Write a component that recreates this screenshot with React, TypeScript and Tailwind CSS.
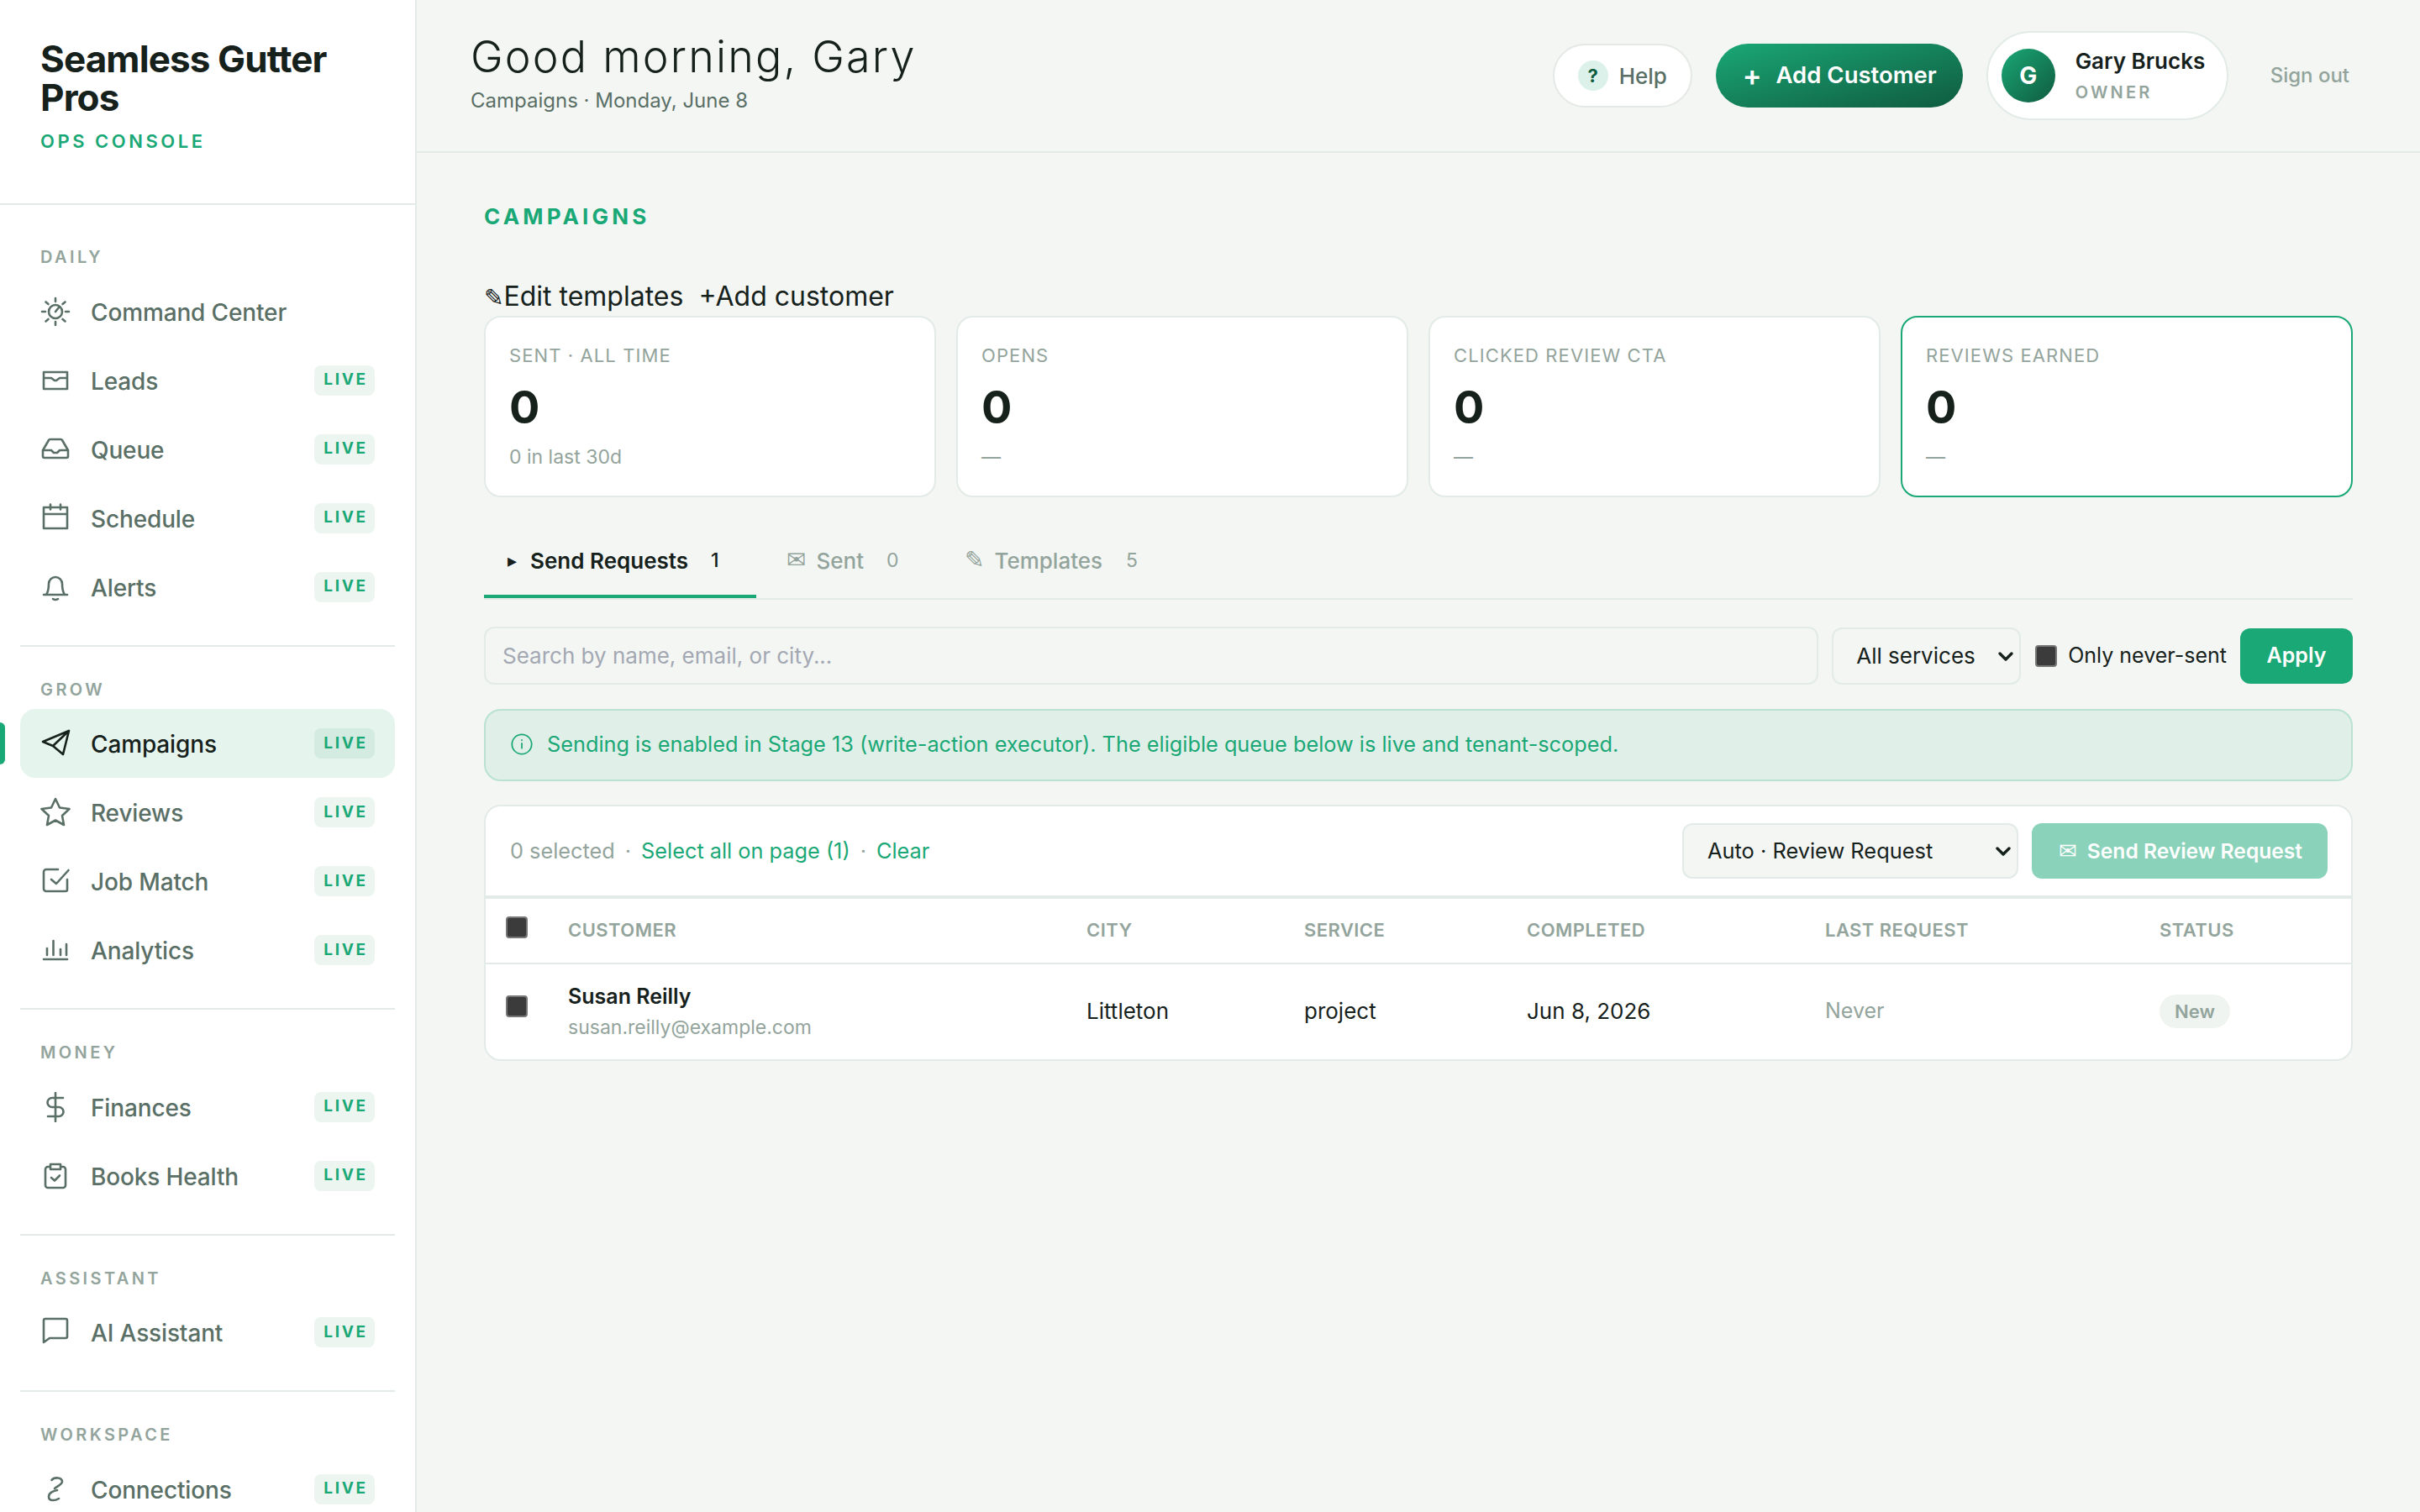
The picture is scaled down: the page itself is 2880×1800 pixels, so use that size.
import type { ReactNode } from "react";

const Stroke = ({ children, dark }: { children: ReactNode; dark?: boolean }) => (
  <svg
    viewBox="0 0 36 36"
    fill="none"
    stroke={dark ? "#16211c" : "#5a6f66"}
    strokeWidth="2.6"
    strokeLinecap="round"
    strokeLinejoin="round"
    className="h-[36px] w-[36px] shrink-0"
  >
    {children}
  </svg>
);

const icons: Record<string, ReactNode> = {
  command: (
    <>
      <circle cx="18" cy="18" r="8" />
      <path d="M18 18l4-5M18 2v4M18 30v4M2 18h4M30 18h4M6.5 6.5l3 2.5M29.5 6.5l-3 2.5M6.5 29.5l3-2.5M29.5 29.5l-3-2.5" />
    </>
  ),
  leads: <path d="M4 8h28v20H4zM4 15h9l4 3h2l4-3h9" />,
  queue: <path d="M3 19h10l3 3h4l3-3h10M10 7L3 19v7a2 2 0 0 0 2 2h26a2 2 0 0 0 2-2v-7L26 7a2 2 0 0 0-2-1H12a2 2 0 0 0-2 1z" />,
  schedule: <path d="M4 5h28v25H4zM4 13h28M12 1.500v6M24 1.500v6" />,
  alerts: <path d="M4 27h28M7 27c2-3 3-6 3-13a8 8 0 0 1 16 0c0 7 1 10 3 13M15 32q3 2 6 0" />,
  campaigns: <path d="M34 3L3 16l12 5 12 10zM34 3L15 21" />,
  reviews: <path d="M18 2l5 10.500 11.500 1.500-8.500 8 2 11-10-5.500-10 5.500 2-11-8.500-8L13 12.500z" />,
  job: <path d="M32 16v12a2 2 0 0 1-2 2H7a3 3 0 0 1-3-3V7a3 3 0 0 1 3-3h14M13 16l6 5L33.500 5" />,
  analytics: <path d="M4 29h28M8 16v8M15.500 7v17M24 17v7M31 11v13" />,
  finances: <path d="M18 1v34M27 7H14a5.500 5.500 0 0 0 0 11h8a5.500 5.500 0 0 1 0 11H9" />,
  books: <path d="M12 7H9a3 3 0 0 0-3 3v19a3 3 0 0 0 3 3h18a3 3 0 0 0 3-3V10a3 3 0 0 0-3-3h-3M12 4h12v6H12zM13 20l4 3.500 6-6" />,
  ai: <path d="M4 30V4a2 2 0 0 1 2-2h24a2 2 0 0 1 2 2v19a2 2 0 0 1-2 2H11z" />,
  connections: <path d="M13.500 7C16 3.500 26 3 26 9c0 3-5 5-9 8M20 19c-5 1-10 3-10 8s7 5 12 2" />,
};

const nav = [
  {
    label: "DAILY",
    items: [
      { name: "Command Center", icon: "command", live: false },
      { name: "Leads", icon: "leads", live: true },
      { name: "Queue", icon: "queue", live: true },
      { name: "Schedule", icon: "schedule", live: true },
      { name: "Alerts", icon: "alerts", live: true },
    ],
  },
  {
    label: "GROW",
    items: [
      { name: "Campaigns", icon: "campaigns", live: true },
      { name: "Reviews", icon: "reviews", live: true },
      { name: "Job Match", icon: "job", live: true },
      { name: "Analytics", icon: "analytics", live: true },
    ],
  },
  {
    label: "MONEY",
    items: [
      { name: "Finances", icon: "finances", live: true },
      { name: "Books Health", icon: "books", live: true },
    ],
  },
  {
    label: "ASSISTANT",
    items: [{ name: "AI Assistant", icon: "ai", live: true }],
  },
  {
    label: "WORKSPACE",
    items: [{ name: "Connections", icon: "connections", live: true }],
  },
];

const stats = [
  { label: "SENT · ALL TIME", sub: "0 in last 30d", hot: false },
  { label: "OPENS", sub: "—", hot: false },
  { label: "CLICKED REVIEW CTA", sub: "—", hot: false },
  { label: "REVIEWS EARNED", sub: "—", hot: true },
];

function Chevron() {
  return (
    <svg viewBox="0 0 20 20" fill="none" stroke="#16211c" strokeWidth="3.400" strokeLinecap="round" strokeLinejoin="round" className="pointer-events-none absolute right-[8px] top-1/2 h-[20px] w-[20px] -translate-y-1/2">
      <path d="M3 7l7 7 7-7" />
    </svg>
  );
}

function Sidebar() {
  return (
    <aside className="relative flex h-full w-[496px] shrink-0 flex-col overflow-hidden border-r-2 border-[#e2ebe7] bg-white">
      <div className="h-[244px] shrink-0 border-b-2 border-[#e2ebe7] pl-[48px] pt-[47px]">
        <div className="w-[380px] text-[44px] font-bold leading-[46px] tracking-[-0.02em] text-[#16211c]">Seamless Gutter Pros</div>
        <div className="mt-[14px] text-[22px] font-semibold leading-[30px] tracking-[0.16em] text-[#1aa876]">OPS CONSOLE</div>
      </div>
      <nav className="pt-[11px]">
        {nav.map((group, i) => (
          <div key={group.label} className={i > 0 ? "mx-[24px] mt-[28px] border-t-2 border-[#e2ebe7] pt-[36px]" : "mx-[24px] pt-[36px]"}>
            <div className="mb-[8.5px] pl-[24px] text-[20px] font-semibold leading-[30px] tracking-[0.17em] text-[#93a49c]">{group.label}</div>
            {group.items.map((item) => {
              const active = item.name === "Campaigns";
              return (
                <div key={item.name} className={`relative flex h-[82px] items-center gap-[24px] rounded-[18px] px-[24px] ${active ? "bg-[#e6f4ee]" : ""}`}>
                  <Stroke dark={active}>{icons[item.icon]}</Stroke>
                  <span className={`pt-[2px] text-[28px] font-medium tracking-[-0.005em] ${active ? "text-[#16211c]" : "text-[#5a6f66]"}`}>{item.name}</span>
                  {item.live && (
                    <span className={`ml-auto flex h-[36px] w-[72px] items-center justify-center rounded-[8px] pl-[3px] text-[19px] font-bold tracking-[0.14em] text-[#1aa876] ${active ? "bg-[#d3ebe1]" : "bg-[#ecf5f0]"}`}>
                      LIVE
                    </span>
                  )}
                  {active && <span className="absolute -left-[24px] top-[16px] h-[50px] w-[6px] rounded-r-[6px] bg-[#1aa876]" />}
                </div>
              );
            })}
          </div>
        ))}
      </nav>
    </aside>
  );
}

function Header() {
  return (
    <header className="flex h-[182px] shrink-0 items-center justify-between border-b-2 border-[#e2ebe7] pl-[64px] pr-[64px]">
      <div className="mb-[6px]">
        <h1 className="text-[52px] font-light leading-[62px] tracking-[0.042em] text-[#16211c]">Good morning, Gary</h1>
        <p className="mt-[4px] text-[24px] leading-[34px] text-[#5a6f66]">Campaigns · Monday, June 8</p>
      </div>
      <div className="flex items-center gap-[28px]">
        <button className="flex h-[76px] w-[166px] items-center gap-[13px] rounded-full border-2 border-[#e4e9e6] bg-white pl-[28px] text-[26px] font-medium text-[#5a6f66]">
          <span className="flex h-[36px] w-[36px] items-center justify-center rounded-full bg-[#dcf1e9] text-[22px] font-bold text-[#0f5c40]">?</span>
          Help
        </button>
        <button className="flex h-[76px] w-[294px] items-center gap-[17px] rounded-full bg-gradient-to-br from-[#1aa876] to-[#0f5c40] pl-[32px] text-[27.500px] font-semibold text-white">
          <span className="text-[34px] leading-none">+</span>
          Add Customer
        </button>
        <div className="flex h-[106px] w-[288px] items-center gap-[24px] rounded-full border-2 border-[#e2ebe7] bg-white pl-[16px]">
          <span className="flex h-[64px] w-[64px] items-center justify-center rounded-full bg-gradient-to-br from-[#1aa876] to-[#0f5c40] text-[28px] font-bold text-white">G</span>
          <div>
            <div className="text-[26px] font-semibold leading-[36px] text-[#16211c]">Gary Brucks</div>
            <div className="mt-[4px] text-[20px] font-semibold leading-[30px] tracking-[0.16em] text-[#93a49c]">OWNER</div>
          </div>
        </div>
        <button className="ml-[2px] px-[20px] text-[24px] font-medium text-[#93a49c]">Sign out</button>
      </div>
    </header>
  );
}

function Tabs() {
  return (
    <div className="mt-[28px] flex h-[94px] gap-[8px] border-b-2 border-[#e2ebe7]">
      <button className="flex h-[92px] w-[324px] items-center border-b-4 border-[#1aa876] pl-[28px] pt-[6px] text-[26px] font-semibold text-[#16211c]">
        <span className="mr-[16px] font-['DejaVu_Sans',sans-serif] text-[22px]">▸</span>
        Send Requests
        <span className="ml-[27px] text-[23px] font-medium">1</span>
      </button>
      <button className="flex h-[92px] w-[204px] items-center border-b-4 border-transparent pl-[28px] pt-[6px] text-[26px] font-medium text-[#93a49c]">
        <span className="mr-[12px] font-['DejaVu_Sans',sans-serif] text-[28px]">✉</span>
        Sent
        <span className="ml-[27px] text-[23px] font-normal">0</span>
      </button>
      <button className="flex h-[92px] items-center border-b-4 border-transparent pl-[28px] pt-[6px] text-[26px] font-medium text-[#93a49c]">
        <span className="mr-[12px] font-['DejaVu_Sans',sans-serif] text-[28px]">✎</span>
        Templates
        <span className="ml-[28px] text-[23px] font-normal">5</span>
      </button>
    </div>
  );
}

function Table() {
  const th = "pb-[2px] text-left text-[22px] font-semibold tracking-[0.02em] text-[#93a49c]";
  return (
    <div className="mt-[28px] overflow-hidden rounded-[20px] border-2 border-[#e2ebe7] bg-white">
      <div className="flex h-[110px] items-center border-b-4 border-[#e2ebe7] pl-[29px] pr-[28px] text-[25.3px]">
        <span className="text-[#93a49c]">0 selected</span>
        <span className="mx-[12px] text-[#93a49c]">·</span>
        <span className="text-[#1aa876]">Select all on page (1)</span>
        <span className="mx-[12px] text-[#93a49c]">·</span>
        <span className="text-[#1aa876]">Clear</span>
        <div className="relative ml-auto w-[400px]">
          <select className="h-[66px] w-full appearance-none rounded-[12px] border-2 border-[#e2ebe7] bg-[#f3f6f3] pl-[28px] text-[25.400px] text-[#16211c]">
            <option>Auto · Review Request</option>
          </select>
          <Chevron />
        </div>
        <button className="ml-[16px] flex h-[66px] w-[352px] items-center gap-[12px] rounded-[12px] bg-[#8ad2b9] pl-[32px] text-[24.600px] font-semibold text-white">
          <span className="font-['DejaVu_Sans',sans-serif] text-[26px] font-normal">✉</span>
          Send Review Request
        </button>
      </div>
      <table className="w-full table-fixed">
        <colgroup>
          <col className="w-[98px]" />
          <col className="w-[617px]" />
          <col className="w-[259px]" />
          <col className="w-[265px]" />
          <col className="w-[355px]" />
          <col className="w-[398px]" />
          <col />
        </colgroup>
        <thead>
          <tr className="h-[77px] border-b-2 border-[#e2ebe7]">
            <th className="pl-[24px] text-left">
              <input type="checkbox" className="block h-[26px] w-[26px] -translate-y-[4px] appearance-none rounded-[4px] border-2 border-[#767676] bg-[#3b3b3b]" />
            </th>
            <th className={th}>CUSTOMER</th>
            <th className={th}>CITY</th>
            <th className={th}>SERVICE</th>
            <th className={th}>COMPLETED</th>
            <th className={th}>LAST REQUEST</th>
            <th className={th}>STATUS</th>
          </tr>
        </thead>
        <tbody>
          <tr className="h-[114px] text-[26px] text-[#16211c]">
            <td className="pb-[2px] pl-[24px]">
              <input type="checkbox" className="block h-[26px] w-[26px] -translate-y-[6px] appearance-none rounded-[4px] border-2 border-[#767676] bg-[#3b3b3b]" />
            </td>
            <td className="pb-[2px]">
              <div className="text-[25px] font-semibold leading-[38px]">Susan Reilly</div>
              <div className="text-[23px] leading-[36px] text-[#93a49c]">susan.reilly@example.com</div>
            </td>
            <td className="pb-[2px]">Littleton</td>
            <td className="pb-[2px]">project</td>
            <td className="pb-[2px]">Jun 8, 2026</td>
            <td className="pb-[2px] text-[25px] text-[#93a49c]">Never</td>
            <td className="pb-[2px]">
              <span className="inline-flex h-[40px] w-[84px] items-center justify-center rounded-full bg-[#eff4f1] text-[22px] font-semibold text-[#93a49c]">New</span>
            </td>
          </tr>
        </tbody>
      </table>
    </div>
  );
}

export default function App() {
  return (
    <div className="flex h-screen overflow-hidden bg-[#f3f6f3] font-['Inter',sans-serif]">
      <Sidebar />
      <main className="flex min-w-0 flex-1 flex-col">
        <Header />
        <section className="px-[80px] pt-[58px]">
          <div className="text-[26px] font-bold leading-[36px] tracking-[0.16em] text-[#1aa876]">CAMPAIGNS</div>
          <div className="mt-[57px] flex h-[40px] gap-[18px] text-[32px] leading-[40px] text-[#16211c]">
            <button><span className="font-['DejaVu_Sans',sans-serif] text-[28px]">✎</span>Edit templates</button>
            <button>+Add customer</button>
          </div>
          <div className="mt-[3px] grid grid-cols-4 gap-[24px]">
            {stats.map((s) => (
              <div key={s.label} className={`h-[216px] rounded-[20px] border-2 bg-white pl-[28px] pt-[30px] ${s.hot ? "border-[#1aa876]" : "border-[#e2ebe7]"}`}>
                <div className="text-[22px] leading-[30px] tracking-[0.05em] text-[#93a49c]">{s.label}</div>
                <div className="mt-[15px] text-[54px] font-bold leading-[64px] text-[#16211c]">0</div>
                <div className="mt-[11px] text-[23px] leading-[32px] text-[#93a49c]">{s.sub}</div>
              </div>
            ))}
          </div>
          <Tabs />
          <div className="mt-[32px] flex h-[69px] items-center">
            <input placeholder="Search by name, email, or city..." className="h-[69px] min-w-0 flex-1 rounded-[12px] border-2 border-[#e2ebe7] bg-transparent pl-[20px] text-[26px] placeholder:text-[#a3a8b3]" />
            <div className="relative ml-[16px] w-[225px]">
              <select className="h-[68px] w-full appearance-none rounded-[12px] border-2 border-[#e2ebe7] bg-transparent pl-[27px] text-[26px] text-[#16211c]">
                <option>All services</option>
              </select>
              <Chevron />
            </div>
            <label className="ml-[17px] flex items-center gap-[13px] text-[25px] text-[#16211c]">
              <input type="checkbox" className="h-[26px] w-[26px] appearance-none rounded-[4px] border-2 border-[#767676] bg-[#3b3b3b]" />
              Only never-sent
            </label>
            <button className="ml-[16px] h-[66px] w-[134px] rounded-[12px] bg-[#1aa876] text-[25px] font-semibold text-white">Apply</button>
          </div>
          <div className="mt-[29px] flex h-[86px] items-center gap-[16px] rounded-[20px] border-2 border-[#b9e2d2] bg-[#e1efe9] pb-[2px] pl-[29px] text-[25.300px] text-[#1aa876]">
            <svg viewBox="0 0 24 24" fill="none" stroke="currentColor" strokeWidth="1.500" strokeLinecap="round" className="h-[28px] w-[28px] shrink-0">
              <circle cx="12" cy="12" r="10" />
              <path d="M12 16v-5M12 8v-.5" />
            </svg>
            Sending is enabled in Stage 13 (write-action executor). The eligible queue below is live and tenant-scoped.
          </div>
          <Table />
        </section>
      </main>
    </div>
  );
}
